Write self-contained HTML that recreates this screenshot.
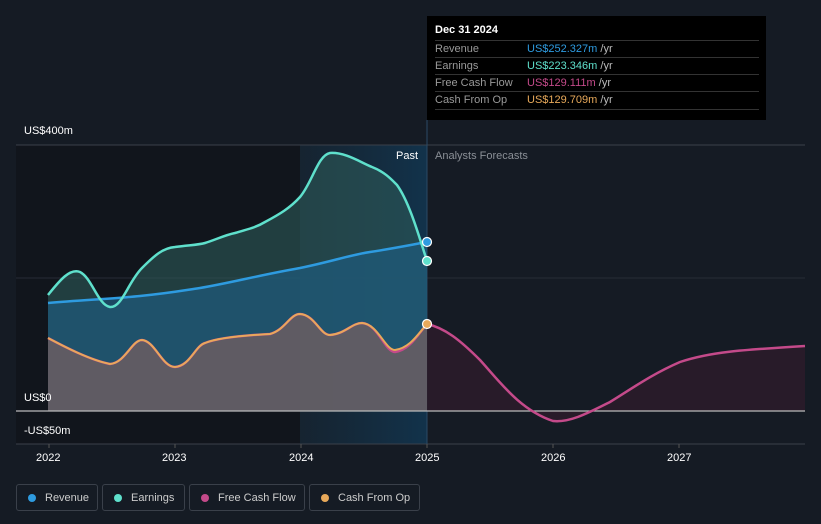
<!DOCTYPE html>
<html><head><meta charset="utf-8"><style>
html,body{margin:0;width:821px;height:524px;overflow:hidden}
body{background:#151b24;font-family:"Liberation Sans",sans-serif;position:relative}
.t{position:absolute;color:#fff;font-size:11px;white-space:nowrap}
.tip{position:absolute;left:427px;top:16px;width:339px;height:104px;background:#000;}
.tip .h{position:absolute;left:8px;top:8px;color:#fff;font-size:11px;font-weight:bold}
.row{position:absolute;left:8px;width:324px;height:17px;border-top:1px solid #333;font-size:11px;line-height:17px;color:#999;white-space:nowrap}
.row span{position:absolute;left:92px}
.row i{font-style:normal;color:#bbb}
.lg{position:absolute;top:484px;height:27px;border:1px solid #3a404a;border-radius:3px;color:#ccc;font-size:11px;line-height:26px;box-sizing:border-box;padding-left:28px;white-space:nowrap}
.lg b{position:absolute;left:11px;top:9px;width:8px;height:8px;border-radius:50%}
</style></head><body>
<svg width="821" height="524" style="position:absolute;left:0;top:0">
<defs>
<linearGradient id="hb" x1="0" x2="1"><stop offset="0" stop-color="#1a3245" stop-opacity=".5"/><stop offset="1" stop-color="#123a57" stop-opacity=".8"/></linearGradient>
</defs>
<rect x="16" y="145" width="411" height="299" fill="#11151c"/>
<rect x="300" y="145" width="127" height="299" fill="url(#hb)"/>
<line x1="16" y1="145" x2="805" y2="145" stroke="#3a404a"/>
<line x1="16" y1="278" x2="805" y2="278" stroke="#262c36"/>
<line x1="16" y1="444" x2="805" y2="444" stroke="#3a404a"/>
<line x1="427" y1="120" x2="427" y2="444" stroke="#2a4a66"/>
<path d="M48,295 C60,280 70,268 80,272 C92,278 98,305 110,307 C122,308 128,282 142,268 C155,255 163,248 175,247 C190,245 198,245 205,243 C215,240 225,235 235,233 C248,229 255,228 265,222 C280,214 290,208 300,197 C312,183 318,155 330,153 C345,152 360,162 372,167 C385,172 392,180 397,185 C410,203 420,240 427,261 L427,411 L48,411 Z" fill="#2d5a58" fill-opacity=".6"/>
<path d="M48,303 C80,300 110,299 140,296 C170,293 180,291 200,288 C230,283 260,275 300,268 C330,262 350,255 370,252 C390,249 405,246 427,242 L427,411 L48,411 Z" fill="#1f5a7a" fill-opacity=".75"/>
<path d="M48,338 C65,347 90,360 110,364 C125,363 132,340 142,340 C155,341 162,367 175,367 C190,366 195,346 205,343 C220,337 250,335 270,334 C285,330 290,314 300,314 C315,315 320,335 330,335 C345,334 352,323 362,323 C378,324 385,352 395,352 C410,350 418,334 427,324 L427,411 L48,411 Z" fill="#7a6060" fill-opacity=".7"/>
<path d="M427,324 C445,328 460,340 480,360 C500,382 520,410 553,421 C570,423 590,412 610,402 C630,390 650,375 680,362 C710,352 740,350 805,346 L805,411 L427,411 Z" fill="#2a1c2a" fill-opacity=".9"/>
<line x1="16" y1="411" x2="805" y2="411" stroke="#bbb" stroke-width="1.2"/>
<path d="M48,303 C80,300 110,299 140,296 C170,293 180,291 200,288 C230,283 260,275 300,268 C330,262 350,255 370,252 C390,249 405,246 427,242" fill="none" stroke="#2e9be0" stroke-width="2.5"/>
<path d="M48,295 C60,280 70,268 80,272 C92,278 98,305 110,307 C122,308 128,282 142,268 C155,255 163,248 175,247 C190,245 198,245 205,243 C215,240 225,235 235,233 C248,229 255,228 265,222 C280,214 290,208 300,197 C312,183 318,155 330,153 C345,152 360,162 372,167 C385,172 392,180 397,185 C410,203 420,240 427,261" fill="none" stroke="#5fe0cc" stroke-width="2.5"/>
<path d="M48,338 C65,347 90,360 110,364 C125,363 132,340 142,340 C155,341 162,367 175,367 C190,366 195,346 205,343 C220,337 250,335 270,334 C285,330 290,314 300,314 C315,315 320,335 330,335 C345,334 352,323 362,323 C378,324 385,352 395,352 C410,350 418,334 427,324" fill="none" stroke="#c44a8a" stroke-width="2.5"/>
<path d="M48,338 C65,347 90,360 110,364 C125,363 132,340 142,340 C155,341 162,367 175,367 C190,366 195,346 205,343 C220,337 250,335 270,334 C285,330 290,314 300,314 C315,315 320,335 330,335 C345,334 352,323 362,323 C378,324 385,350 395,350 C410,348 418,334 427,324" fill="none" stroke="#e8a95a" stroke-width="2"/>
<path d="M427,324 C445,328 460,340 480,360 C500,382 520,410 553,421 C570,423 590,412 610,402 C630,390 650,375 680,362 C710,352 740,350 805,346" fill="none" stroke="#c44a8a" stroke-width="2.5"/>
<circle cx="427" cy="242" r="4.5" fill="#2e9be0" stroke="#fff" stroke-width="1.2"/>
<circle cx="427" cy="261" r="4.5" fill="#5fe0cc" stroke="#fff" stroke-width="1.2"/>
<circle cx="427" cy="324" r="4.5" fill="#e8a95a" stroke="#fff" stroke-width="1.2"/>
<g stroke="#555"><line x1="49" y1="444" x2="49" y2="448"/><line x1="175" y1="444" x2="175" y2="448"/><line x1="301" y1="444" x2="301" y2="448"/><line x1="427" y1="444" x2="427" y2="448"/><line x1="553" y1="444" x2="553" y2="448"/><line x1="679" y1="444" x2="679" y2="448"/></g>
</svg>
<div class="t" style="left:24px;top:125px">US$400m</div>
<div class="t" style="left:24px;top:392px">US$0</div>
<div class="t" style="left:24px;top:425px">-US$50m</div>
<div class="t" style="left:396px;top:150px">Past</div>
<div class="t" style="left:435px;top:150px;color:#8a8f96">Analysts Forecasts</div>
<div class="t" style="left:36px;top:452px">2022</div>
<div class="t" style="left:162px;top:452px">2023</div>
<div class="t" style="left:289px;top:452px">2024</div>
<div class="t" style="left:415px;top:452px">2025</div>
<div class="t" style="left:541px;top:452px">2026</div>
<div class="t" style="left:667px;top:452px">2027</div>
<div class="tip"><div class="h">Dec 31 2024</div>
<div class="row" style="top:24px">Revenue<span><em style="font-style:normal;color:#2e9be0">US$252.327m</em> <i>/yr</i></span></div>
<div class="row" style="top:41px">Earnings<span><em style="font-style:normal;color:#5fe0cc">US$223.346m</em> <i>/yr</i></span></div>
<div class="row" style="top:58px">Free Cash Flow<span><em style="font-style:normal;color:#c44a8a">US$129.111m</em> <i>/yr</i></span></div>
<div class="row" style="top:75px;border-bottom:1px solid #333">Cash From Op<span><em style="font-style:normal;color:#e8a95a">US$129.709m</em> <i>/yr</i></span></div>
</div>
<div class="lg" style="left:16px;width:82px"><b style="background:#2e9be0"></b>Revenue</div>
<div class="lg" style="left:102px;width:83px"><b style="background:#5fe0cc"></b>Earnings</div>
<div class="lg" style="left:189px;width:116px"><b style="background:#c44a8a"></b>Free Cash Flow</div>
<div class="lg" style="left:309px;width:111px"><b style="background:#e8a95a"></b>Cash From Op</div>
</body></html>
